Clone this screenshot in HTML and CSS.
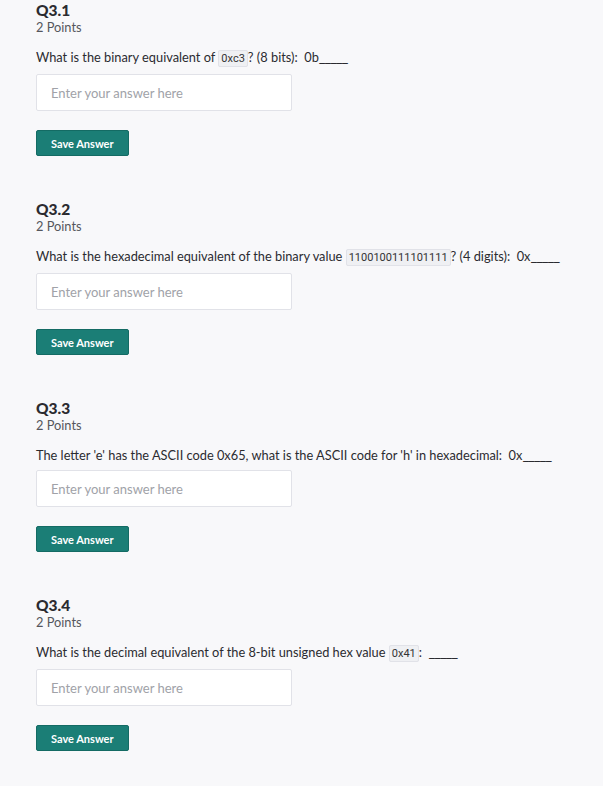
FILE: index.html
```html
<!DOCTYPE html>
<html lang="en">

<head>
    <meta charset="UTF-8">
    <meta name="viewport" content="width=device-width, initial-scale=1.0">
    <title>Assignment - Q3</title>
    <link rel="stylesheet" href="styles.css">
</head>

<body>

    <main class="questions">

        <section class="question">
            <h2>Q3.1</h2>
            <p class="points">2 Points</p>
            <p class="prompt">What is the binary equivalent of <code>0xc3</code>? (8 bits):&nbsp; 0b<span class="blank">_____</span></p>
            <input type="text" class="answer" placeholder="Enter your answer here">
            <button class="save">Save Answer</button>
        </section>

        <section class="question">
            <h2>Q3.2</h2>
            <p class="points">2 Points</p>
            <p class="prompt">What is the hexadecimal equivalent of the binary value <code>1100100111101111</code>? (4 digits):&nbsp; 0x<span class="blank">_____</span></p>
            <input type="text" class="answer" placeholder="Enter your answer here">
            <button class="save">Save Answer</button>
        </section>

        <section class="question">
            <h2>Q3.3</h2>
            <p class="points">2 Points</p>
            <p class="prompt">The letter 'e' has the ASCII code 0x65, what is the ASCII code for 'h' in hexadecimal:&nbsp; 0x<span class="blank">_____</span></p>
            <input type="text" class="answer" placeholder="Enter your answer here">
            <button class="save">Save Answer</button>
        </section>

        <section class="question">
            <h2>Q3.4</h2>
            <p class="points">2 Points</p>
            <p class="prompt">What is the decimal equivalent of the 8-bit unsigned hex value <code>0x41</code>:&nbsp; <span class="blank">_____</span></p>
            <input type="text" class="answer" placeholder="Enter your answer here">
            <button class="save">Save Answer</button>
        </section>

    </main>

</body>

</html>
```

FILE: styles.css
```css
:root {
    --bg: #f8f8fa;
    --text: #2b2b30;
    --grey: #55565c;
    --placeholder: #a0a2a8;
    --border: #e1e2e8;
    --teal: #1b7e76;
    --teal-dark: #146b64;
}

* {
    margin: 0;
    box-sizing: border-box;
}

body {
    background-color: var(--bg);
    color: var(--text);
    font-family: Lato, "Liberation Sans", sans-serif;
    min-height: 100vh;
}

.questions {
    padding: 1px 36px 0;
}

.question {
    display: flex;
    flex-direction: column;
    align-items: flex-start;
    margin-bottom: 44px;
}

.question h2 {
    font-size: 15.5px;
    font-weight: 900;
    line-height: 18px;
}

.points {
    font-size: 12.8px;
    line-height: 16px;
    color: var(--grey);
}

.prompt {
    font-size: 12.8px;
    line-height: 18px;
    margin-top: 13px;
}

/* underscores joined into one line, like the original font draws them */
.blank {
    font-size: 15px;
    line-height: 1;
    letter-spacing: -1.2px;
}

code {
    font-family: Roboto, "Liberation Sans", sans-serif;
    font-variant-numeric: tabular-nums;
    font-size: 11px;
    color: #333;
    background-color: #eff0f3;
    border: 1px solid var(--border);
    border-radius: 2px;
    padding: 1px 2px;
}

input, button {
    appearance: none;
    outline: none;
    font-family: inherit;
}

.answer {
    width: 256px;
    height: 37px;
    margin-top: 6px;
    padding: 0 14px;
    background-color: white;
    border: 1px solid var(--border);
    border-radius: 2px;
    font-size: 13px;
    color: var(--text);
}

.answer::placeholder {
    color: var(--placeholder);
}

.save {
    margin-top: 19px;
    height: 26px;
    padding: 0 14px;
    background-color: var(--teal);
    border: 1px solid var(--teal-dark);
    border-radius: 2px;
    color: white;
    font-size: 11px;
    font-weight: bold;
    cursor: pointer;
}
```
